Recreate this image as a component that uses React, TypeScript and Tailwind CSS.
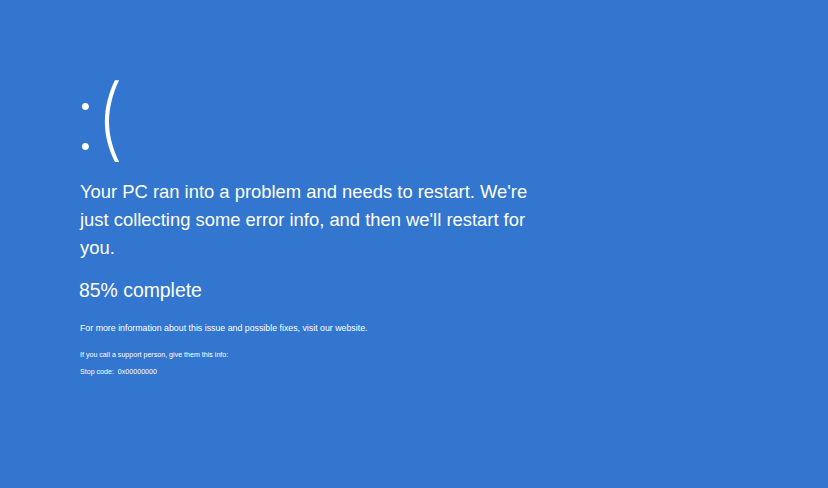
export default function App() {
  return (
    <div className="w-[828px] h-[488px] bg-[#3276cf] text-white overflow-hidden font-['Liberation_Sans',Arial,sans-serif]">
      <div className="pl-[80px] pt-[70px] flex flex-col">
        <div className="font-['Inter',sans-serif] font-extralight text-[90px] leading-[100px] h-[100px] -ml-[7px] -mt-[2px] tracking-[-3px]">
          :(
        </div>
        <p className="mt-[10px] w-[470px] text-[18.4px] leading-[28px]">
          Your PC ran into a problem and needs to restart. We're just collecting some error info, and then we'll restart for you.
        </p>
        <p className="mt-[16px] -ml-[1px] text-[19.4px] leading-[24px]">85% complete</p>
        <p className="mt-[20px] text-[8.8px] leading-[12px]">
          For more information about this issue and possible fixes, visit our website.
        </p>
        <p className="mt-[16px] text-[7.1px] leading-[10px]">If you call a support person, give them this info:</p>
        <p className="mt-[7px] text-[7.1px] leading-[10px]">Stop code:&nbsp; 0x00000000</p>
      </div>
    </div>
  );
}
